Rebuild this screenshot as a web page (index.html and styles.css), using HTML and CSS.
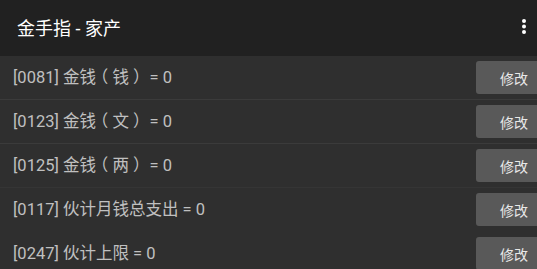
FILE: index.html
```html
<!DOCTYPE html>
<html lang="zh">
<head>
<meta charset="utf-8">
<link rel="stylesheet" href="styles.css">
</head>
<body>
<header class="appbar">
  <div class="title">金手指 - 家产</div>
  <svg class="menu" width="6" height="18" viewBox="0 0 6 18"><circle cx="3" cy="3" r="2" fill="#fff"/><circle cx="3" cy="8.5" r="2" fill="#fff"/><circle cx="3" cy="14" r="2" fill="#fff"/></svg>
</header>
<main class="list">
  <div class="row"><span class="label">[0081] 金钱<span class="paren">（</span>钱<span class="paren">）</span> = 0</span><button class="edit">修改</button></div>
  <div class="row"><span class="label">[0123] 金钱<span class="paren">（</span>文<span class="paren">）</span> = 0</span><button class="edit">修改</button></div>
  <div class="row faint"><span class="label">[0125] 金钱<span class="paren">（</span>两<span class="paren">）</span> = 0</span><button class="edit">修改</button></div>
  <div class="row none"><span class="label">[0117] 伙计月钱总支出 = 0</span><button class="edit">修改</button></div>
  <div class="row none"><span class="label">[0247] 伙计上限 = 0</span><button class="edit">修改</button></div>
</main>
</body>
</html>
```
FILE: styles.css
```css
html, body {
  margin: 0;
  padding: 0;
  height: 100%;
  overflow: hidden;
  background: #2f2f2f;
  font-family: Roboto, "Noto Sans CJK SC", sans-serif;
}
.appbar {
  height: 56px;
  background: #212121;
  display: flex;
  align-items: center;
  justify-content: space-between;
  padding: 0 10px 0 17px;
  box-sizing: border-box;
}
.title {
  color: #ffffff;
  font-size: 18px;
  margin-top: -2px;
}
.menu {
  display: block;
  margin-top: -2px;
}
.list {
  display: flex;
  flex-direction: column;
}
.row {
  height: 44px;
  box-sizing: border-box;
  border-bottom: 1px solid #3b3b3b;
  display: flex;
  align-items: flex-start;
  justify-content: space-between;
  padding: 5px 0 0 13px;
}
.row.faint { border-bottom-color: #353535; }
.row.none { border-bottom-color: #2f2f2f; }
.label {
  color: #c0c0c0;
  font-size: 16.5px;
  line-height: 33px;
}
.paren {
  display: inline-block;
  width: 1em;
  text-align: center;
  font-feature-settings: "halt" 1;
}
.edit {
  width: 61px;
  height: 33px;
  background: #595959;
  border: none;
  border-radius: 3px 0 0 3px;
  color: #e8e8e8;
  font-family: Roboto, "Noto Sans CJK SC", sans-serif;
  font-size: 14px;
  padding: 0 0 0 24px;
  text-align: left;
  margin: 0;
}
```
